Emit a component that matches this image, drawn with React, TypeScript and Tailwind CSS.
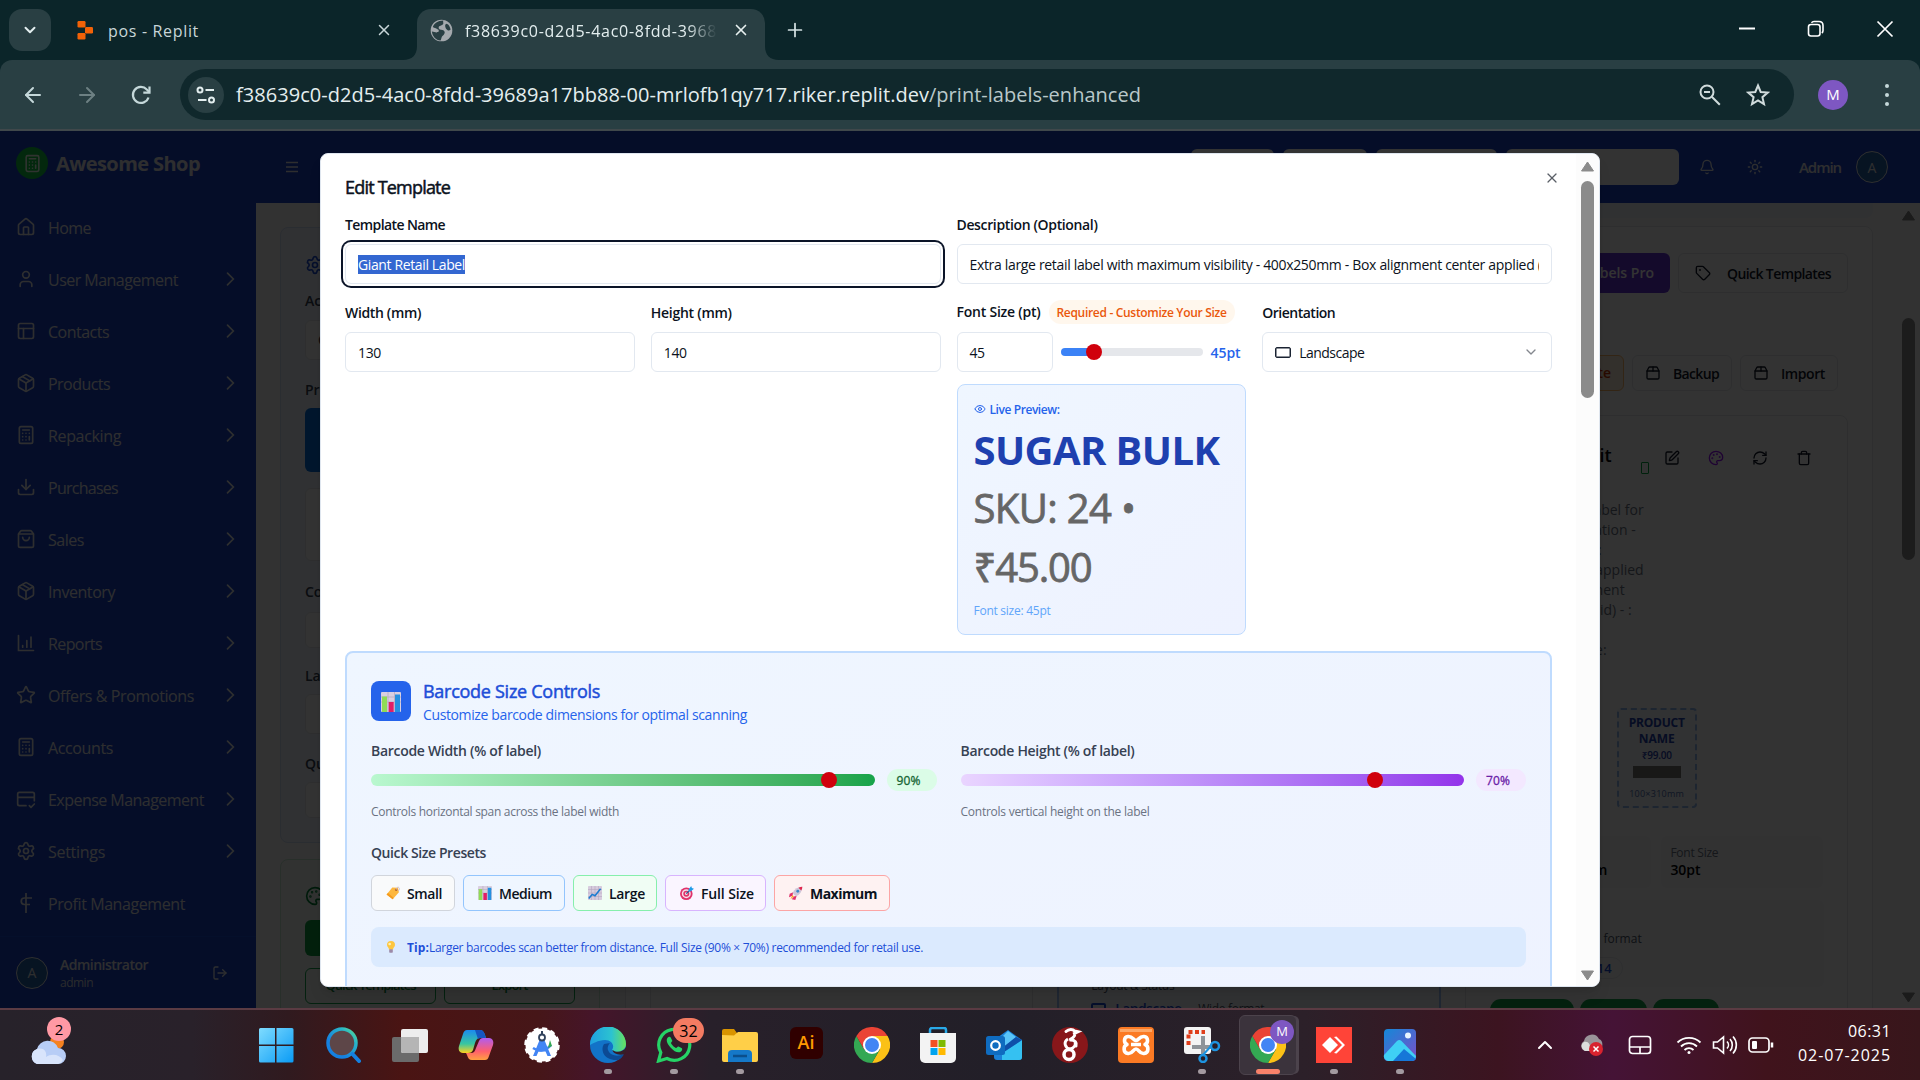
import React, { useLayoutEffect, useRef, useState } from "react";
import {
  House, User, PanelsTopLeft, Package, Calculator, Download, ShoppingBag, Star, Settings, LogOut,
  Bell, Sun, X, ChevronDown, ChevronUp, Tag, SquarePen, Palette, RefreshCw, Trash, Eye, Plus, ArrowLeft, ArrowRight, Package2,
} from "lucide-react";

/** Single line of text whose tracking is adjusted so that it fills `w` pixels. */
function T({ w, className = "", children }: { w: number; className?: string; children: string }) {
  const ref = useRef<HTMLSpanElement>(null);
  const [spacing, setSpacing] = useState(0);
  useLayoutEffect(() => {
    const el = ref.current;
    if (!el) return;
    el.style.letterSpacing = "0px";
    const natural = el.getBoundingClientRect().width;
    setSpacing((w - natural) / children.length);
  }, [w, children]);
  return (
    <span ref={ref} className={`inline-block whitespace-pre ${className}`} style={{ letterSpacing: `${spacing}px` }}>
      {children}
    </span>
  );
}

/* ---------- browser chrome ---------- */

function TabStrip() {
  return (
    <div className="flex h-[60px] shrink-0 items-end bg-[#0b2529] text-[#c8d6d8]">
      <div className="ml-[9px] mb-[9px] flex h-[42px] w-[42px] items-center justify-center rounded-[13px] bg-[#293f43]">
        <ChevronDown size={18} strokeWidth={2.6} className="text-[#e3eeef]" />
      </div>
      <div className="mb-[9px] ml-[25px] flex h-[42px] w-[317px] items-center">
        <svg width="18" height="20" viewBox="0 0 18 20" className="shrink-0">
          <rect x="1.500" y="1" width="8" height="6.500" rx="1.200" fill="#f26207" />
          <rect x="9" y="7" width="8" height="6.500" rx="1.200" fill="#f26207" />
          <rect x="1.500" y="13" width="8" height="6.500" rx="1.200" fill="#f26207" />
        </svg>
        <T w={91} className="ml-[14px] pt-[2px] text-[16px]">pos - Replit</T>
        <X size={18} strokeWidth={2} className="ml-auto" />
      </div>
      <svg width="14" height="14" viewBox="0 0 14 14" className="ml-[10px]">
        <path d="M14 0v14H0C9 14 14 9 14 0z" fill="#293f43" />
      </svg>
      <div className="flex h-[51px] w-[348px] items-center rounded-t-[14px] bg-[#293f43] pb-[9px] pl-[13px]">
        <svg width="23" height="23" viewBox="0 0 24 24" className="shrink-0">
          <circle cx="12" cy="12" r="11.300" fill="#a4a9ad" />
          <path d="M14 1.500c-1 2 1 3-1 4.500s-4 1-4 3 2 2 4 2.500 3 2 2 4-2.500 2-3 4-1 3-1 3C6 22 2.500 18 2 13l5 1c2 0 3-1.500 1.500-3S3 9 3 8c1-3 5-6.500 11-6.500zM17 5c2 0 4 3 4.500 6-1.500 2-3.500 1-4.500-.5S15 6 17 5z" fill="#293f43" />
        </svg>
        <div className="ml-[12px] w-[252px] overflow-hidden pt-[2px] [mask-image:linear-gradient(90deg,#000_88%,transparent)]">
          <T w={262} className="text-[16px] text-[#e3eeef]">f38639c0-d2d5-4ac0-8fdd-39689</T>
        </div>
        <X size={18} strokeWidth={2.2} className="ml-[15px] text-[#e8f0f0]" />
      </div>
      <svg width="14" height="14" viewBox="0 0 14 14">
        <path d="M0 0v14h14C5 14 0 9 0 0z" fill="#293f43" />
      </svg>
      <Plus size={22} strokeWidth={1.9} className="mb-[19px] ml-[5px] text-[#d5e2e3]" />
      <div className="mb-[22px] ml-auto mr-[26px] flex items-center gap-[51px] text-white">
        <svg width="18" height="18" viewBox="0 0 18 18"><path d="M1 8.500h16" stroke="currentColor" strokeWidth="2" /></svg>
        <svg width="18" height="18" viewBox="0 0 18 18" fill="none" stroke="currentColor" strokeWidth="1.600">
          <rect x="1.500" y="4.500" width="11.500" height="11.500" rx="2.500" />
          <path d="M4.500 2.800C5 2 6 1.500 7 1.500h5c2.500 0 4 1.500 4 4v5c0 1-.4 2-1.200 2.500" />
        </svg>
        <svg width="18" height="18" viewBox="0 0 18 18" stroke="currentColor" strokeWidth="1.700"><path d="M1.500 1.500l15 15M16.500 1.500l-15 15" /></svg>
      </div>
    </div>
  );
}

function Toolbar() {
  return (
    <div className="shrink-0 bg-[#0b2529]">
      <div className="flex h-[71px] items-center rounded-t-[12px] border-b-2 border-[#40484b] bg-[#293f43] text-[#c5d8da]">
        <ArrowLeft size={24} strokeWidth={2} className="ml-[21px]" />
        <ArrowRight size={24} strokeWidth={2} className="ml-[30px] text-[#6d8083]" />
        <svg width="24" height="24" viewBox="0 0 24 24" fill="none" stroke="currentColor" strokeWidth="2.200" className="ml-[30px]">
          <path d="M19.500 14.500A8 8 0 1 1 17.800 6.500L20.500 9.200" />
          <path d="M20.500 3.500v6.200h-6.200" />
        </svg>
        <div className="ml-[27px] flex h-[51px] w-[1614px] items-center rounded-full bg-[#10282c] pl-[8px]">
          <div className="flex h-[36px] w-[36px] items-center justify-center rounded-full bg-[#293f43] text-[#e3eeef]">
            <svg width="20" height="20" viewBox="0 0 20 20" fill="none" stroke="currentColor" strokeWidth="2">
              <circle cx="4" cy="5" r="2.500" /><path d="M9.500 5H18" />
              <circle cx="15.500" cy="15" r="2.500" /><path d="M2 15h8.500" />
            </svg>
          </div>
          <T w={693} className="ml-[12px] text-[20px] text-[#e4eeef]">f38639c0-d2d5-4ac0-8fdd-39689a17bb88-00-mrlofb1qy717.riker.replit.dev</T>
          <T w={212} className="text-[20px] text-[#b9c8ca]">/print-labels-enhanced</T>
          <svg width="22" height="22" viewBox="0 0 22 22" fill="none" stroke="currentColor" strokeWidth="2" className="ml-[558px] text-[#d0dbdc]">
            <circle cx="8" cy="8" r="6.500" /><path d="M12.800 12.800l8 8M5 8h6" />
          </svg>
          <svg width="24" height="24" viewBox="0 0 24 24" fill="none" stroke="currentColor" strokeWidth="2" className="ml-[25px] text-[#d0dbdc]">
            <path d="M12 2.500l2.700 6.500 7 .6-5.300 4.600 1.600 6.900L12 17.400 6 21.100l1.600-6.900-5.300-4.600 7-.6z" />
          </svg>
        </div>
        <div className="ml-[24px] flex h-[30px] w-[30px] items-center justify-center rounded-full bg-[#7e57c2] text-[15px] text-white">M</div>
        <div className="ml-[37px] flex flex-col gap-[5px]">
          <i className="h-[4px] w-[4px] rounded-full bg-[#c5d8da]" />
          <i className="h-[4px] w-[4px] rounded-full bg-[#c5d8da]" />
          <i className="h-[4px] w-[4px] rounded-full bg-[#c5d8da]" />
        </div>
      </div>
    </div>
  );
}

/* ---------- app behind the dialog ---------- */

const ReportsIcon = () => (
  <svg width="20" height="20" viewBox="0 0 24 24" fill="none" stroke="currentColor" strokeWidth="2" strokeLinecap="round">
    <path d="M3 3v18h18M8 17v-2M13 17V9M18 17V5" />
  </svg>
);
const ExpenseIcon = () => (
  <svg width="20" height="20" viewBox="0 0 24 24" fill="none" stroke="currentColor" strokeWidth="2" strokeLinecap="round" strokeLinejoin="round">
    <path d="M12 20H4a2 2 0 0 1-2-2V6a2 2 0 0 1 2-2h16a2 2 0 0 1 2 2v8M2 10h20M16 20l2 2 4-4" />
  </svg>
);
const ProfitIcon = () => (
  <svg width="20" height="24" viewBox="0 0 20 24" fill="none" stroke="currentColor" strokeWidth="1.700">
    <path d="M10 2v20M16 7H8.500a3 3 0 0 0 0 6.500H14" />
  </svg>
);

const navItems: { label: string; w: number; icon: React.ReactNode; leaf?: boolean }[] = [
  { label: "Home", w: 43, icon: <House size={20} />, leaf: true },
  { label: "User Management", w: 130, icon: <User size={20} /> },
  { label: "Contacts", w: 61, icon: <PanelsTopLeft size={20} /> },
  { label: "Products", w: 62, icon: <Package size={20} /> },
  { label: "Repacking", w: 73, icon: <Calculator size={20} /> },
  { label: "Purchases", w: 70, icon: <Download size={20} /> },
  { label: "Sales", w: 36, icon: <ShoppingBag size={20} /> },
  { label: "Inventory", w: 67, icon: <Package size={20} /> },
  { label: "Reports", w: 54, icon: <ReportsIcon /> },
  { label: "Offers & Promotions", w: 146, icon: <Star size={20} /> },
  { label: "Accounts", w: 65, icon: <Calculator size={20} /> },
  { label: "Expense Management", w: 156, icon: <ExpenseIcon /> },
  { label: "Settings", w: 57, icon: <Settings size={20} /> },
  { label: "Profit Management", w: 137, icon: <ProfitIcon />, leaf: true },
];

function Sidebar() {
  return (
    <aside className="flex h-full w-[256px] shrink-0 flex-col bg-[#1943c8] text-gray-200">
      <div className="flex h-[64px] items-center pl-4">
        <div className="flex h-8 w-8 items-center justify-center rounded-full bg-[#10c840] text-[#f0fff0]">
          <Calculator size={19} />
        </div>
        <T w={144} className="ml-2 pt-[2px] text-[20px] font-bold">Awesome Shop</T>
      </div>
      <nav className="flex flex-col pt-[6px]">
        {navItems.map((n) => (
          <div key={n.label} className="flex h-[52px] items-center pl-4 pr-4">
            <span className="flex w-5 justify-center">{n.icon}</span>
            <T w={n.w} className="ml-3 pt-px text-[16px]">{n.label}</T>
            {!n.leaf && (
              <svg width="20" height="20" viewBox="0 0 24 24" fill="none" stroke="currentColor" strokeWidth="2" strokeLinecap="round" className="ml-auto">
                <path d="M9 5l7 7-7 7" />
              </svg>
            )}
          </div>
        ))}
      </nav>
      <div className="mt-auto flex h-[72px] items-center border-t border-[#1d4ed8] pl-4">
        <div className="flex h-8 w-8 items-center justify-center rounded-full border border-gray-200 bg-[#2563a8] text-[14px] font-medium">A</div>
        <div className="ml-3 flex w-[152px] flex-col">
          <T w={88} className="self-start pt-[2px] text-[14px] font-semibold leading-[18px]">Administrator</T>
          <T w={33} className="self-start text-[12px] leading-[18px] text-gray-300">admin</T>
        </div>
        <LogOut size={16} />
      </div>
    </aside>
  );
}

function HeaderBar() {
  return (
    <header className="flex h-[72px] shrink-0 items-center bg-[#1943c8] text-gray-200">
      <svg width="14" height="12" viewBox="0 0 14 12" stroke="currentColor" strokeWidth="1.500" className="ml-[29px]"><path d="M1 1.500h12M1 6h12M1 10.500h12" /></svg>
      <div className="ml-auto flex gap-[9px]">
        <div className="h-9 w-[83px] rounded-md bg-white" />
        <div className="h-9 w-[84px] rounded-md bg-white" />
        <div className="h-9 w-[121px] rounded-md bg-white" />
        <div className="h-9 w-[173px] rounded-md bg-white" />
      </div>
      <Bell size={16} className="ml-[20px]" />
      <Sun size={16} className="ml-[32px]" />
      <T w={42} className="ml-[36px] text-[15px] font-semibold">Admin</T>
      <div className="ml-[15px] mr-[32px] flex h-8 w-8 items-center justify-center rounded-full border border-gray-200 bg-[#2563a8] text-[14px] font-medium">A</div>
    </header>
  );
}

function SettingsColumn() {
  return (
    <div className="flex w-[320px] shrink-0 flex-col pt-[24px]">
      <div className="h-[616px] shrink-0 rounded-lg border border-[#d3dff5] bg-[#f0f5fd] pl-[24px] pt-[27px] text-[14px] font-semibold text-gray-700">
        <Settings size={20} className="text-[#1d4ed8]" />
        <div className="mt-[15px] h-[20px]">Account</div>
        <div className="mt-[10px] h-[40px] w-[270px] rounded-md border border-gray-200 bg-white pl-3 pt-2">Choose</div>
        <div className="mt-[19px] h-[20px]">Printer</div>
        <div className="mt-[9px] h-[64px] w-[270px] rounded-md bg-[#0070e0]" />
        <div className="mt-[16px] h-[73px] w-[270px] rounded-md border border-gray-200 bg-white" />
        <div className="mt-[20px] h-[20px]">Copies</div>
        <div className="mt-[11px] h-[36px] w-[270px] rounded-md border border-gray-200 bg-white" />
        <div className="mt-[17px] h-[20px]">Labels</div>
        <div className="mt-[9px] h-[40px] w-[270px] rounded-md border border-gray-200 bg-white" />
        <div className="mt-[19px] h-[20px]">Quantity</div>
        <div className="mt-[9px] h-[36px] w-[270px] rounded-md border border-gray-200 bg-white" />
      </div>
      <div className="mt-4 h-[180px] shrink-0 rounded-lg border border-[#c6e8d3] bg-[#f2f9f4] pl-[24px] pt-[26px]">
        <Palette size={20} className="text-green-700" />
        <div className="mt-[14px] h-[36px] w-[270px] rounded-md bg-[#12a040]" />
        <div className="mt-[12px] flex gap-2 text-[13px] font-semibold leading-[32px] text-green-700">
          <div className="h-9 w-[131px] rounded-md border border-[#16a34a] text-center"><T w={90}>Quick Templates</T></div>
          <div className="h-9 w-[131px] rounded-md border border-[#16a34a] text-center"><T w={36}>Export</T></div>
        </div>
      </div>
    </div>
  );
}

const descriptionLines = [
  { text: "Label for", cls: "w-[154px]" },
  { text: "identification -", cls: "w-[146px]" },
  { text: "- box set:", cls: "w-[112px]" },
  { text: "center applied", cls: "w-[154px]" },
  { text: "- alignment", cls: "w-[135px]" },
  { text: "(grid) - :", cls: "w-[142px]" },
];

function TemplateCard() {
  return (
    <div className="rounded-lg border border-gray-200 bg-white px-[24px] pt-[28px]">
      <div className="flex h-[28px] items-center">
        <div className="w-[122px] pb-[5px] text-right text-[18px] font-semibold text-black">Kit</div>
        <div className="ml-[29px] mt-[20px] h-[12px] w-[8px] rounded-[1px] border border-green-600" />
        <SquarePen size={16} className="ml-[15px] text-gray-900" />
        <Palette size={16} className="ml-[28px] text-purple-600" />
        <RefreshCw size={16} className="ml-[28px] text-gray-900" />
        <Trash size={16} className="ml-[28px] text-gray-900" />
      </div>
      <div className="mt-[28px] text-[14px] leading-[20px] text-gray-500">
        {descriptionLines.map((l) => (
          <div key={l.text} className={`${l.cls} whitespace-nowrap text-right`}>{l.text}</div>
        ))}
      </div>
      <div className="mt-[20px] w-[117px] text-right text-[14px] leading-[20px] text-gray-500">size:</div>
      <div className="ml-[127px] mt-[48px] flex h-[100px] w-[80px] flex-col items-center rounded border-2 border-dashed border-[#90b8f0] bg-[#f3f7fc] pt-[5px]">
        <T w={56} className="text-[12px] font-bold leading-[16px] text-[#1e40af]">PRODUCT</T>
        <T w={36} className="text-[12px] font-bold leading-[16px] text-[#1e40af]">NAME</T>
        <T w={30} className="text-[10px] font-semibold leading-[16px] text-[#1e40af]">₹99.00</T>
        <div className="mt-[3px] h-[12px] w-[48px] bg-[#7a7a74]" />
        <T w={55} className="mt-[9px] text-[9px] leading-[14px] text-[#5070b0]">100×310mm</T>
      </div>
      <div className="mt-[28px] flex gap-[10px]">
        <div className="h-[52px] w-[162px] rounded-md bg-gray-50 pr-[44px] pt-[23px] text-right text-[14px] font-semibold text-black">10mm</div>
        <div className="flex h-[52px] w-[162px] flex-col items-start rounded-md bg-gray-50 pl-[9px] pt-[8px]">
          <T w={48} className="text-[12px] leading-[17px] text-gray-500">Font Size</T>
          <T w={30} className="text-[14px] font-semibold leading-[18px] text-black">30pt</T>
        </div>
      </div>
      <div className="mt-[12px] h-[87px] w-[334px] rounded-md bg-gray-50 pt-[30px]">
        <div className="w-[152px] text-right text-[12px] leading-[18px] text-gray-600">Tall format</div>
        <div className="ml-[60px] mt-[9px] h-[22px] w-[73px] rounded-full border border-gray-200 pr-[10px] text-right text-[13px] font-semibold leading-[20px] text-[#1d4ed8]">14</div>
      </div>
      <div className="mt-[12px] flex gap-[6px]">
        <div className="h-[22px] w-[84px] rounded-full bg-[#16a34a]" />
        <div className="h-[22px] w-[67px] rounded-full bg-[#16a34a]" />
        <div className="h-[22px] w-[66px] rounded-full bg-[#16a34a]" />
      </div>
    </div>
  );
}

function Gallery() {
  return (
    <div className="flex w-[1248px] shrink-0 flex-col">
      <div className="h-[15px] w-full shrink-0 rounded-b-lg bg-[#eef2f7]" />
      <div className="mt-[8px] h-[900px] shrink-0 rounded-lg border border-gray-200 bg-white px-[24px] pt-[26px]">
        <div className="flex justify-end gap-2">
          <div className="h-10 w-[150px] rounded-md bg-[#6633d8] pr-4 text-right text-[14px] font-semibold leading-[40px] text-white">Labels Pro</div>
          <div className="flex h-10 w-[170px] items-center rounded-md border border-gray-200 pl-4 text-gray-900">
            <Tag size={16} />
            <T w={104} className="ml-4 text-[14px] font-semibold">Quick Templates</T>
          </div>
        </div>
        <div className="mr-[10px] mt-[62px] flex justify-end gap-2 text-gray-900">
          <div className="h-9 w-[120px] rounded-md border border-orange-300 bg-[#fdf0dc] pr-3 text-right text-[14px] font-semibold leading-[34px] text-orange-700">Create</div>
          <div className="flex h-9 w-[100px] items-center rounded-md border border-gray-200 pl-[12px]">
            <Package2 size={16} /><T w={46} className="ml-[12px] text-[14px] font-semibold">Backup</T>
          </div>
          <div className="flex h-9 w-[98px] items-center rounded-md border border-gray-200 pl-[12px]">
            <Package2 size={16} /><T w={44} className="ml-[12px] text-[14px] font-semibold">Import</T>
          </div>
        </div>
        <div className="mt-[24px] grid h-[620px] grid-cols-3 gap-6">
          <div className="rounded-lg border border-gray-200" />
          <div className="flex flex-col items-start rounded-lg border-2 border-[#a0c0f8] bg-[#f6f9ff] pl-[32px] pt-[560px]">
            <T w={83} className="text-[12px] leading-[18px] text-gray-600">Layout &amp; Status</T>
            <div className="mt-[4px] flex h-[20px] items-center">
              <div className="h-[12px] w-[15px] rounded-[2px] border-2 border-[#1d4ed8]" />
              <T w={66} className="ml-[9px] text-[14px] font-semibold leading-[20px] text-[#1d4ed8]">Landscape</T>
              <T w={66} className="ml-[17px] text-[12px] leading-[20px] text-gray-600">Wide format</T>
            </div>
          </div>
          <TemplateCard />
        </div>
      </div>
    </div>
  );
}

function PageScrollbar() {
  return (
    <div className="ml-auto flex h-full w-[24px] flex-col items-center">
      <svg width="15" height="11" viewBox="0 0 15 11" className="mt-[7px]"><path d="M7.500 1l6 9h-12z" fill="#888" stroke="#888" strokeLinejoin="round" /></svg>
      <div className="mt-[97px] h-[242px] w-[13px] rounded-full bg-[#8b8b8b]" />
      <svg width="15" height="11" viewBox="0 0 15 11" className="mb-[5px] mt-auto"><path d="M7.500 10l6-9h-12z" fill="#888" stroke="#888" strokeLinejoin="round" /></svg>
    </div>
  );
}

/* ---------- dialog ---------- */

const ChartEmoji = ({ size }: { size: number }) => (
  <svg width={size} height={size} viewBox="0 0 20 20" className="shrink-0">
    <rect width="20" height="20" rx="1" fill="#d9cfe0" />
    <path d="M0 5h20M0 10h20M7 0v20M13.500 0v20" stroke="#b6a9c2" strokeWidth=".8" />
    <rect x="1" y="4.500" width="5" height="15.500" fill="#8fdc56" />
    <rect x="7.700" y="10" width="5" height="10" fill="#e01e66" />
    <rect x="14" y="2.500" width="5" height="17.500" fill="#2490e0" />
  </svg>
);
const TagEmoji = () => (
  <svg width="14" height="14" viewBox="0 0 20 20" className="shrink-0">
    <path d="M9 2l8 .5 1.500 6.500-9 10L.800 12z" fill="#fdb73e" />
    <path d="M.8 12l8.700 7 1.500-1.700L3 10z" fill="#f59a1c" />
    <circle cx="14.500" cy="5.500" r="1.700" fill="#b4622a" />
    <path d="M14.500 5.500c0-4 4-5 4.500-2s-1 3-2 3" fill="none" stroke="#c9b6c8" strokeWidth="1.200" />
  </svg>
);
const TrendEmoji = () => (
  <svg width="14" height="14" viewBox="0 0 20 20" className="shrink-0">
    <rect width="20" height="20" rx="1" fill="#d6cbdd" />
    <path d="M0 5h20M0 10h20M0 15h20M5 0v20M10 0v20M15 0v20" stroke="#b3a5bf" strokeWidth=".8" />
    <path d="M1 18l5-6 4 2 8-10" fill="none" stroke="#1c7bd0" strokeWidth="2.200" />
  </svg>
);
const TargetEmoji = () => (
  <svg width="14" height="14" viewBox="0 0 20 20" className="shrink-0">
    <circle cx="9" cy="11" r="9" fill="#e0326b" /><circle cx="9" cy="11" r="6.400" fill="#f5dfe8" />
    <circle cx="9" cy="11" r="4.300" fill="#e0326b" /><circle cx="9" cy="11" r="1.900" fill="#f5dfe8" />
    <path d="M9 11l6-6" stroke="#23618f" strokeWidth="1.600" /><path d="M12.500 4.500L16 0l1 3 3 1-4.500 3.500-3 .500z" fill="#1f9be8" />
  </svg>
);
const RocketEmoji = () => (
  <svg width="14" height="14" viewBox="0 0 20 20" className="shrink-0">
    <path d="M6 9L1 11l-1 5 5-2zM11 14l-2 6-5-1 3-4z" fill="#e0326b" />
    <path d="M5 10C8 4 13 1 19 1c0 6-3 11-9 14z" fill="#cfc5d8" />
    <path d="M13.500 2.500C15.500 1.500 17 1 19 1c0 2-.5 3.500-1.500 5.500z" fill="#e0274e" />
    <circle cx="12.500" cy="7.500" r="2" fill="#3a86c8" /><path d="M5 13l2 2-5 4z" fill="#fda41e" />
  </svg>
);
const BulbEmoji = () => (
  <svg width="10" height="12" viewBox="0 0 14 18" className="shrink-0">
    <path d="M7 0a6 6 0 0 1 6 6c0 3-3 4-3 7H4c0-3-3-4-3-7a6 6 0 0 1 6-6z" fill="#fdc63f" />
    <circle cx="5" cy="4.500" r="2" fill="#fff0b0" /><rect x="4.300" y="12.500" width="5.400" height="5" rx="1" fill="#9c8aa8" />
  </svg>
);

const labelCls = "text-[14px] font-semibold leading-[14px] text-[#0b1220]";
const inputCls = "flex h-10 items-center rounded-md border border-slate-200 bg-white text-[14px] text-[#0b1220]";

function FontSizeField() {
  return (
    <div className="flex flex-col">
      <div className="-mt-[1px] flex h-[24px] items-center">
        <T w={84} className={labelCls}>Font Size (pt)</T>
        <div className="ml-[8px] flex h-[24px] w-[186px] items-center justify-center rounded-full bg-orange-50">
          <T w={170} className="pt-px text-[12px] font-semibold text-[#ea580c]">Required - Customize Your Size</T>
        </div>
      </div>
      <div className="mt-[8px] flex items-center">
        <div className={`${inputCls} w-[96px] pl-[12px]`}><T w={15}>45</T></div>
        <div className="relative ml-2 h-2 w-[142px] rounded-full bg-[linear-gradient(90deg,#3b82f6_24%,#e5e7eb_24%)]">
          <i className="absolute -top-1 left-[25px] h-4 w-4 rounded-full bg-[#d0000c]" />
        </div>
        <T w={30} className="ml-2 text-[14px] font-semibold text-[#2563eb]">45pt</T>
      </div>
      <div className="mt-3 flex h-[251px] flex-col items-start rounded-lg border border-[#bfdbfe] bg-gradient-to-br from-[#eff6ff] to-[#eef2ff] pl-[16px] pt-[16px]">
        <div className="flex h-[16px] items-center text-[#2563eb]">
          <Eye size={12} />
          <T w={70} className="ml-1 pt-[2px] text-[12px] font-semibold">Live Preview:</T>
        </div>
        <T w={246} className="mt-[8px] text-[40px] font-bold leading-[50px] text-[#1e40af]">SUGAR BULK</T>
        <T w={162} className="mt-[3px] text-[40px] leading-[59px] text-[#666] [-webkit-text-stroke:0.8px_#666]">SKU: 24 •</T>
        <T w={118} className="text-[40px] leading-[59px] text-[#666] [-webkit-text-stroke:0.8px_#666]">₹45.00</T>
        <T w={77} className="mt-[7px] text-[12px] leading-[16px] text-[#60a5fa]">Font size: 45pt</T>
      </div>
    </div>
  );
}

function RangeControl(p: {
  label: string; labelW: number; track: string; pos: string; pill: string; value: string; note: string; noteW: number;
}) {
  return (
    <div className="flex flex-col items-start">
      <T w={p.labelW} className="text-[14px] font-semibold leading-[20px] text-gray-700">{p.label}</T>
      <div className="mt-2 flex h-[22px] w-full items-center gap-3">
        <div className={`relative h-3 flex-1 rounded-lg bg-gradient-to-r ${p.track}`}>
          <i className={`absolute -top-[2px] h-4 w-4 rounded-full bg-[#d0000c] ${p.pos}`} />
        </div>
        <div className={`flex h-[22px] w-[50px] items-center rounded-full pl-[10px] ${p.pill}`}>
          <T w={24} className="pt-px text-[12px] font-medium [-webkit-text-stroke:0.3px]">{p.value}</T>
        </div>
      </div>
      <T w={p.noteW} className="mt-[13px] text-[12px] leading-[16px] text-gray-500">{p.note}</T>
    </div>
  );
}

const presets = [
  { label: "Small", w: 35, icon: <TagEmoji />, cls: "w-[84px] border-gray-300 bg-gray-50 font-semibold" },
  { label: "Medium", w: 53, icon: <ChartEmoji size={14} />, cls: "w-[102px] border-[#93c5fd] bg-[#eff6ff] font-semibold" },
  { label: "Large", w: 36, icon: <TrendEmoji />, cls: "w-[84px] border-[#86efac] bg-green-50 font-semibold" },
  { label: "Full Size", w: 53, icon: <TargetEmoji />, cls: "w-[101px] border-[#d8b4fe] bg-purple-50 font-semibold" },
  { label: "Maximum", w: 67, icon: <RocketEmoji />, cls: "w-[116px] border-[#fca5a5] bg-red-50 font-bold" },
];

function BarcodePanel() {
  return (
    <section className="mt-[16px] h-[480px] shrink-0 rounded-lg border-2 border-[#bfdbfe] bg-gradient-to-br from-[#eff6ff] to-[#eef2ff] px-[24px] pt-[28px]">
      <div className="flex h-[40px] items-center">
        <div className="flex h-10 w-10 items-center justify-center rounded-lg bg-[#2563eb] pt-[2px]"><ChartEmoji size={20} /></div>
        <div className="ml-3 flex flex-col items-start pt-[2px]">
          <T w={177} className="text-[18px] leading-[25px] text-[#1d4ed8] [-webkit-text-stroke:0.5px]">Barcode Size Controls</T>
          <T w={324} className="text-[14px] leading-[22px] text-[#2563eb]">Customize barcode dimensions for optimal scanning</T>
        </div>
      </div>
      <div className="mt-[20px] grid grid-cols-2 gap-6">
        <RangeControl label="Barcode Width (% of label)" labelW={170} track="from-green-200 to-[#16a34a]" pos="left-[450px]" pill="bg-green-100 text-[#166534]" value="90%" note="Controls horizontal span across the label width" noteW={248} />
        <RangeControl label="Barcode Height (% of label)" labelW={174} track="from-purple-200 to-[#9333ea]" pos="left-[406px]" pill="bg-purple-100 text-[#6b21a8]" value="70%" note="Controls vertical height on the label" noteW={189} />
      </div>
      <div className="mt-[23px] flex flex-col items-start">
        <T w={115} className="text-[14px] font-semibold leading-[20px] text-gray-700">Quick Size Presets</T>
      </div>
      <div className="mt-[12px] flex gap-2">
        {presets.map((b) => (
          <div key={b.label} className={`flex h-9 items-center rounded-md border pl-[14px] text-[14px] text-[#0b1220] ${b.cls}`}>
            {b.icon}
            <T w={b.w} className="ml-[7px]">{b.label}</T>
          </div>
        ))}
      </div>
      <div className="mt-4 flex h-10 items-center rounded-lg bg-[#dbeafe] pl-[15px] text-[12px] text-[#1d4ed8]">
        <BulbEmoji />
        <T w={22} className="ml-[11px] pt-px font-bold">Tip:</T>
        <T w={494} className="pt-px">Larger barcodes scan better from distance. Full Size (90% × 70%) recommended for retail use.</T>
      </div>
    </section>
  );
}

function Dialog() {
  return (
    <div className="flex h-[834px] w-[1280px] overflow-hidden rounded-lg border border-[#dfe6ef] bg-white shadow-lg">
      <div className="flex w-[1255px] flex-col pl-[24px] pr-[24px] pt-[16px]">
        <div className="flex h-[38px] shrink-0 items-start justify-between">
          <T w={105} className="pt-[7px] text-[18px] leading-[20px] text-[#0b1220] [-webkit-text-stroke:0.5px]">Edit Template</T>
          <X size={16} strokeWidth={1.800} className="-mr-[8px] text-[#5a5f66]" />
        </div>
        <div className="mt-[10px] grid shrink-0 grid-cols-2 gap-4">
          <div className="flex flex-col items-start">
            <T w={100} className={labelCls}>Template Name</T>
            <div className={`${inputCls} mt-[12px] w-full pl-3 ring-2 ring-[#0b1428] ring-offset-2`}>
              <T w={107} className="bg-[#3367d1] leading-[19px] text-white">Giant Retail Label</T>
            </div>
          </div>
          <div className="flex flex-col items-start">
            <T w={141} className={labelCls}>Description (Optional)</T>
            <div className={`${inputCls} mt-[12px] w-full px-3`}>
              <div className="w-full overflow-hidden">
                <T w={572}>Extra large retail label with maximum visibility - 400x250mm - Box alignment center applied (</T>
              </div>
            </div>
          </div>
        </div>
        <div className="mt-[17px] grid shrink-0 grid-cols-4 gap-4">
          <div className="flex flex-col items-start">
            <T w={76} className={`${labelCls} mt-[5px]`}>Width (mm)</T>
            <div className={`${inputCls} mt-[12px] w-full pl-3`}><T w={23}>130</T></div>
          </div>
          <div className="flex flex-col items-start">
            <T w={81} className={`${labelCls} mt-[5px]`}>Height (mm)</T>
            <div className={`${inputCls} mt-[12px] w-full pl-3`}><T w={23}>140</T></div>
          </div>
          <FontSizeField />
          <div className="flex flex-col items-start">
            <T w={73} className={`${labelCls} mt-[5px]`}>Orientation</T>
            <div className={`${inputCls} mt-[12px] w-full px-3`}>
              <div className="h-[11px] w-[16px] rounded-[2px] border-[1.500px] border-[#1a2332] shadow-[inset_0_0_0_0.5px_#1a2332]" />
              <T w={65} className="ml-2">Landscape</T>
              <ChevronDown size={16} className="ml-auto opacity-50" />
            </div>
          </div>
        </div>
        <BarcodePanel />
      </div>
      <div className="flex w-[23px] flex-col items-center bg-[#fcfcfc]">
        <svg width="15" height="11" viewBox="0 0 15 11" className="mt-[7px]"><path d="M7.500 1l6 9h-12z" fill="#8b8b8b" stroke="#8b8b8b" strokeLinejoin="round" /></svg>
        <div className="mt-[9px] h-[217px] w-[13px] rounded-full bg-[#8b8b8b]" />
        <svg width="15" height="11" viewBox="0 0 15 11" className="mb-[5px] mt-auto"><path d="M7.500 10l6-9h-12z" fill="#8b8b8b" stroke="#8b8b8b" strokeLinejoin="round" /></svg>
      </div>
    </div>
  );
}

/* ---------- taskbar ---------- */

const ChromeLogo = () => (
  <svg width="36" height="36" viewBox="0 0 36 36">
    <path d="M18 9h15.600A18 18 0 0 1 18 36l7.800-13.500z" fill="#fbc116" />
    <path d="M2.400 9L10.200 22.500 18 27l7.800-4.500L18 36A18 18 0 0 1 2.400 9z" fill="#34a853" />
    <path d="M2.400 9A18 18 0 0 1 33.600 9H18l-7.800 13.500z" fill="#ea4335" />
    <circle cx="18" cy="18" r="9" fill="#fff" /><circle cx="18" cy="18" r="7" fill="#4285f4" />
  </svg>
);

const apps: { id: string; dot?: boolean; art: React.ReactNode; badge?: string }[] = [
  { id: "start", art: (
    <svg width="36" height="36" viewBox="0 0 36 36" className="mr-[4px]">
      <defs><linearGradient id="win" x1="0" y1="0" x2="1" y2="1"><stop stopColor="#7fdcff" /><stop offset="1" stopColor="#0a9bf5" /></linearGradient></defs>
      <path d="M1 2.500a1.500 1.500 0 0 1 1.500-1.500H17v16.500H1zM18.500 1H34a1.500 1.500 0 0 1 1.500 1.500v15h-17zM1 19h16v16.500H2.500A1.500 1.500 0 0 1 1 34zM18.500 19h17v15a1.500 1.500 0 0 1-1.500 1.500H18.500z" fill="url(#win)" />
    </svg>) },
  { id: "search", art: (
    <svg width="36" height="36" viewBox="0 0 36 36" fill="none">
      <defs><linearGradient id="mag" x1="0" y1="1" x2="1" y2="0"><stop offset=".3" stopColor="#1580e0" /><stop offset=".75" stopColor="#28b6c8" /><stop offset="1" stopColor="#5fe08a" /></linearGradient></defs>
      <circle cx="16" cy="16" r="14" fill="#5d4648" stroke="url(#mag)" strokeWidth="3.500" />
      <path d="M26.500 27l6.500 7" stroke="#1580e0" strokeWidth="4" strokeLinecap="round" />
    </svg>) },
  { id: "tasks", art: (
    <svg width="36" height="36" viewBox="0 0 36 36">
      <rect x="0" y="10" width="27" height="25" rx="2" fill="#6b6b6b" />
      <rect x="9" y="2" width="27" height="24" rx="2" fill="#ededed" /><path d="M9 10h18v16H11a2 2 0 0 1-2-2z" fill="#b5b5b5" />
    </svg>) },
  { id: "copilot", art: (
    <svg width="36" height="36" viewBox="0 0 36 36">
      <defs>
        <linearGradient id="cpa" x1="0" y1="0" x2="0" y2="1"><stop stopColor="#1b8af0" /><stop offset=".6" stopColor="#38c6a0" /><stop offset="1" stopColor="#ffd21e" /></linearGradient>
        <linearGradient id="cpb" x1="0" y1="1" x2="0" y2="0"><stop stopColor="#ffa040" /><stop offset=".4" stopColor="#ff5f6d" /><stop offset="1" stopColor="#b05cf0" /></linearGradient>
      </defs>
      <path d="M9 3h13c3 0 4 2 5 5l1 3h-6c-3 0-4 2-5 5l-2 7c-1 2-2 3-5 3H5c-4 0-5-4-4-7L5 7c1-3 2-4 4-4z" fill="url(#cpa)" />
      <path d="M27 33H14c-3 0-4-2-5-5l-1-2h5c3 0 4-2 5-5l3-7c1-2 2-3 4-3h6c4 0 5 4 4 7l-4 11c-1 3-2 4-4 4z" fill="url(#cpb)" />
      <path d="M17 3h5c3 0 4 2 5 5l1 3h-6l-2 1z" fill="#1556c0" />
    </svg>) },
  { id: "studio", art: (
    <svg width="36" height="36" viewBox="0 0 36 36">
      <circle cx="18" cy="18" r="16.500" fill="#fff" stroke="#fff" strokeWidth="2.500" strokeDasharray="5 3.600" />
      <path d="M16 12h4l7 17h-3.500l-2-4.500h-7L12.500 29H9z" fill="#4285f4" /><path d="M9 21c6 4 13 3 18-3" fill="none" stroke="#4285f4" strokeWidth="2.500" />
      <path d="M26 13l2 6-4 2z" fill="#34a853" /><circle cx="18" cy="10.500" r="3" fill="#fff" stroke="#31425c" strokeWidth="1.800" /><path d="M18 4v4" stroke="#31425c" strokeWidth="2" />
    </svg>) },
  { id: "edge", dot: true, art: (
    <svg width="36" height="36" viewBox="0 0 36 36">
      <defs><linearGradient id="edg" x1="0" y1=".3" x2="1" y2=".3"><stop stopColor="#1fa0e0" /><stop offset=".6" stopColor="#2cc3d0" /><stop offset="1" stopColor="#68e05c" /></linearGradient></defs>
      <circle cx="18" cy="18" r="18" fill="#1273c8" />
      <path d="M0 18a18 18 0 0 1 36-1c0 7-9 10-14 6 3-4 0-10-7-10C8 13 2 17 0 18z" fill="url(#edg)" />
      <path d="M14 17c-4 6 0 17 14 16 3-1 5-4 6-6-6 3-14 2-16-4-1-3 1-6 2-7z" fill="#0c4a94" />
      <path d="M36.500 19c-1.500 5-9 8-14 4 0 3 6 6 12.500 4 1-2 2-5 1.500-8z" fill="#371d27" />
    </svg>) },
  { id: "whatsapp", dot: true, badge: "32", art: (
    <svg width="36" height="36" viewBox="0 0 36 36" fill="none">
      <path d="M2.500 34l2.300-8.500A15.500 15.500 0 1 1 11 31.500z" stroke="#25d366" strokeWidth="3.200" />
      <path d="M12.500 10c-3 2-2 6 2 10.500s8 6 10.500 4c1.500-1.500 1.500-3 .5-3.500l-3-1.500c-1-.3-1.500 1.500-2.500 1.500s-5-4-5-5 1.500-1.500 1.300-2.300l-1.600-3.300c-.4-.9-1.500-.8-2.200-.4z" fill="#25d366" />
    </svg>) },
  { id: "files", dot: true, art: (
    <svg width="36" height="36" viewBox="0 0 36 36">
      <path d="M0 4a2 2 0 0 1 2-2h10l3 4v6H0z" fill="#d99400" /><path d="M0 8l12 .500L16 5h18a2 2 0 0 1 2 2v26a2 2 0 0 1-2 2H2a2 2 0 0 1-2-2z" fill="#ffcf48" />
      <path d="M6 27a4 4 0 0 1 4-4h16a4 4 0 0 1 4 4v8H6z" fill="#1578c8" /><path d="M11 29h14" stroke="#0b4f8c" strokeWidth="2.500" />
    </svg>) },
  { id: "illustrator", art: (
    <div className="mb-[3px] flex h-[32px] w-[33px] items-center justify-center rounded-[6px] bg-[#300000] pb-[2px] text-[18px] font-semibold text-[#ff9a00]">Ai</div>) },
  { id: "chrome", art: <ChromeLogo /> },
  { id: "store", art: (
    <svg width="36" height="36" viewBox="0 0 36 36">
      <path d="M10 8V3a2 2 0 0 1 2-2h12a2 2 0 0 1 2 2v5" fill="none" stroke="#29a9e8" strokeWidth="2.500" />
      <path d="M0 6h36v25a5 5 0 0 1-5 5H5a5 5 0 0 1-5-5z" fill="#f3f3f3" />
      <path d="M10.500 13h7v7h-7z" fill="#f25022" /><path d="M18.500 13h7v7h-7z" fill="#7fba00" /><path d="M10.500 21h7v7h-7z" fill="#00a4ef" /><path d="M18.500 21h7v7h-7z" fill="#ffb900" />
    </svg>) },
  { id: "outlook", art: (
    <svg width="36" height="36" viewBox="0 0 36 36">
      <path d="M8 13L22 3l14 10v17a3 3 0 0 1-3 3H11a3 3 0 0 1-3-3z" fill="#1a80d8" /><path d="M12 14L22 4l8 6-14 12z" fill="#58c4f8" />
      <path d="M36 13L16 26v7h17a3 3 0 0 0 3-3z" fill="#35c1f1" /><path d="M30 10l6 3-18 12-2-4z" fill="#0f4fa8" />
      <rect x="0" y="9" width="19" height="19" rx="2.500" fill="#0f6cc0" /><circle cx="9.500" cy="18.500" r="4.300" fill="none" stroke="#fff" strokeWidth="2.200" />
    </svg>) },
  { id: "wireguard", art: (
    <svg width="36" height="36" viewBox="0 0 36 36">
      <circle cx="18" cy="18" r="18" fill="#88171a" />
      <path d="M14 4.500c3-3 7-2.500 8.500-.5l3.500.8-3.500 1.700c1.500 3-2 4.500-5 6.500 6-.5 7.500 3 6.500 6" fill="none" stroke="#fff" strokeWidth="3" strokeLinecap="round" />
      <path d="M16 12c-5 3-3 9 2 10 5-1 6-5 5-7" fill="none" stroke="#fff" strokeWidth="3" />
      <circle cx="17" cy="27.500" r="5" fill="none" stroke="#fff" strokeWidth="3.500" />
    </svg>) },
  { id: "xampp", art: (
    <svg width="36" height="36" viewBox="0 0 36 36">
      <rect width="36" height="36" rx="4" fill="#fb7a24" /><path d="M2 2h32v3H2z" fill="#fda868" />
      <path d="M9 17.500c-3.500-1.500-3.500-7.500 1-8 5-.5 5 4 8 4s3-4.500 8-4c4.500.5 4.500 6.500 1 8 4 1.500 4 8.500-1 9-5 .5-5-4.500-8-4.500s-3 5-8 4.500c-5-.5-5-7.500-1-9zM13 17.500h10" fill="none" stroke="#fff" strokeWidth="3.600" strokeLinejoin="round" />
    </svg>) },
  { id: "snip", dot: true, art: (
    <svg width="38" height="36" viewBox="0 0 38 36">
      <rect x="1" width="27" height="27" rx="3" fill="#f4f4f4" /><path d="M5.500 18V5H22" fill="none" stroke="#e03e1a" strokeWidth="4" strokeDasharray="4 2.500" />
      <path d="M20 9v18M9 20h19" stroke="#8f9499" strokeWidth="4" />
      <circle cx="32" cy="19" r="4" fill="none" stroke="#1d94e0" strokeWidth="2.500" /><circle cx="20" cy="31.500" r="3.500" fill="none" stroke="#1d94e0" strokeWidth="2.500" /><path d="M20 28l8-9" stroke="#1d94e0" strokeWidth="2" />
    </svg>) },
  { id: "chrome-active", art: <ChromeLogo />, badge: "M" },
  { id: "anydesk", dot: true, art: (
    <svg width="36" height="36" viewBox="0 0 36 36">
      <rect width="36" height="36" fill="#ff4438" /><path d="M6 18l8-8 8 8-8 8zM18 10l2.500-.500L29 18l-8.500 8.500L18 26l8-8z" fill="#fff" />
    </svg>) },
  { id: "photos", dot: true, art: (
    <svg width="34" height="34" viewBox="0 0 34 34">
      <defs><linearGradient id="pht" x1="0" y1="0" x2="1" y2="1"><stop stopColor="#1488d8" /><stop offset="1" stopColor="#7a4fc8" /></linearGradient></defs>
      <rect x="1" y="1" width="32" height="32" rx="4" fill="url(#pht)" /><path d="M1 27l13-14c1.500-1.500 3-1.500 4.500 0L33 28a5 5 0 0 1-5 5H5a5 5 0 0 1-4-6z" fill="#3fd0f5" />
      <path d="M10 33l11-12 12 10a5 5 0 0 1-4 2z" fill="#1677d8" /><circle cx="25" cy="7.500" r="3" fill="#e8f4ff" />
    </svg>) },
];

function Taskbar() {
  return (
    <footer className="flex h-[72px] shrink-0 items-center border-t-2 border-[#5b3b43] bg-[linear-gradient(90deg,#27222a_0%,#29212a_10%,#301a1f_15%,#4a1413_21%,#461618_28%,#45152a_31%,#28202a_37%,#221f28_52%,#2c2029_68%,#3c1420_78%,#451336_84%,#40131c_92%,#38161b_100%)]">
      <div className="relative ml-[28px] h-[52px] w-[44px]">
        <svg width="40" height="32" viewBox="0 0 40 32" className="mt-[16px]">
          <circle cx="29" cy="7" r="7" fill="#f58220" />
          <path d="M9 29a8 8 0 0 1 0-15 11 11 0 0 1 21-1 8 8 0 0 1 0 16z" fill="#b7cdf6" /><path d="M9 29a8 8 0 0 1 0-15c8-2 10 4 9 8 6-4 14-2 17 3a8 8 0 0 1-5 4z" fill="#d8e4fb" />
        </svg>
        <span className="absolute left-[19px] -top-[2px] flex h-[24px] w-[24px] items-center justify-center rounded-full bg-[#ff99a4] text-[15px] text-black">2</span>
      </div>
      <div className="ml-[173px] flex">
        {apps.map((a) => {
          const active = a.id === "chrome-active";
          return (
            <div key={a.id} className="flex w-[66px] justify-center">
              <div className={`relative flex h-[60px] w-[58px] items-center justify-center ${active ? "rounded-[6px] border border-[#4c434c] bg-[#3b333c] shadow-[3px_0_0_-1px_#4c434c]" : "pb-px"}`}>
                {a.art}
                {a.badge === "32" && (
                  <span className="absolute left-[28px] top-[3px] flex h-[25px] w-[31px] items-center justify-center rounded-full bg-[#f47b62] text-[16px] text-black">32</span>
                )}
                {active && (
                  <span className="absolute left-[30px] top-[4px] flex h-[24px] w-[24px] items-center justify-center rounded-full bg-[#7e57c2] text-[13px] text-white">M</span>
                )}
                {a.dot && <i className="absolute bottom-[1px] left-[25px] h-[5px] w-[8px] rounded-full bg-[#a39aa0]" />}
                {active && <i className="absolute bottom-0 left-[16px] h-[5px] w-[24px] rounded-full bg-[#f9826a]" />}
              </div>
            </div>
          );
        })}
      </div>
      <ChevronUp size={24} strokeWidth={2} className="ml-auto text-white" />
      <svg width="26" height="22" viewBox="0 0 26 22" className="ml-[22px]">
        <path d="M6 17a5.500 5.500 0 0 1-1-10A8 8 0 0 1 20 5c3 1 4 4 3 8l-5 4z" fill="#9a9499" /><path d="M6 17a5 5 0 0 1-1-9c5-1 6 3 6 5l2 4z" fill="#ddd" />
        <circle cx="17" cy="15" r="7" fill="#d8232f" /><path d="M14.500 12.500l5 5M19.500 12.500l-5 5" stroke="#fff" strokeWidth="1.500" />
      </svg>
      <svg width="24" height="20" viewBox="0 0 24 20" fill="none" stroke="#fff" strokeWidth="1.700" className="ml-[23px]">
        <rect x="1.500" y="1.500" width="21" height="17" rx="3" /><path d="M1.500 12h21M12 12v6.500" />
      </svg>
      <svg width="26" height="20" viewBox="0 0 26 20" fill="none" stroke="#fff" strokeWidth="1.800" className="ml-[24px]">
        <path d="M1.500 7.500a16.500 16.500 0 0 1 23 0M5 11.500a11.300 11.300 0 0 1 16 0M8.500 15a6.300 6.300 0 0 1 9 0" /><circle cx="13" cy="17.500" r="1.500" fill="#fff" stroke="none" />
      </svg>
      <svg width="26" height="20" viewBox="0 0 26 20" fill="none" stroke="#fff" strokeWidth="1.600" className="ml-[10px]">
        <path d="M1.500 7v6h4l6 5V2l-6 5zM15 6.500a5 5 0 0 1 0 7M18 4a9 9 0 0 1 0 12M21 1.500a12.500 12.500 0 0 1 0 17" />
      </svg>
      <svg width="26" height="18" viewBox="0 0 26 18" fill="none" stroke="#fff" strokeWidth="1.700" className="ml-[10px]">
        <rect x="1" y="2" width="20" height="14" rx="3.500" /><path d="M24 6.500v5" strokeWidth="2.500" /><rect x="4" y="5" width="5" height="8" rx="1" fill="#fff" stroke="none" />
      </svg>
      <div className="-mt-[4px] ml-[23px] mr-[29px] flex w-[94px] flex-col items-end text-[16px] leading-[24px] text-white">
        <T w={43}>06:31</T>
        <T w={93}>02-07-2025</T>
      </div>
    </footer>
  );
}

export default function App() {
  return (
    <div className="flex h-[1080px] w-[1920px] flex-col overflow-hidden font-['Open_Sans','Noto_Sans',sans-serif]">
      <TabStrip />
      <Toolbar />
      <div className="relative flex h-[877px] shrink-0 overflow-hidden bg-white">
        <Sidebar />
        <main className="flex min-w-0 flex-1 flex-col">
          <HeaderBar />
          <div className="flex h-[805px] overflow-hidden bg-[#fafafa] pl-[24px]">
            <SettingsColumn />
            <div className="w-[25px] shrink-0" />
            <Gallery />
            <PageScrollbar />
          </div>
        </main>
        <div className="absolute inset-0 flex justify-center bg-black/80 pt-[22px]">
          <Dialog />
        </div>
      </div>
      <Taskbar />
    </div>
  );
}
